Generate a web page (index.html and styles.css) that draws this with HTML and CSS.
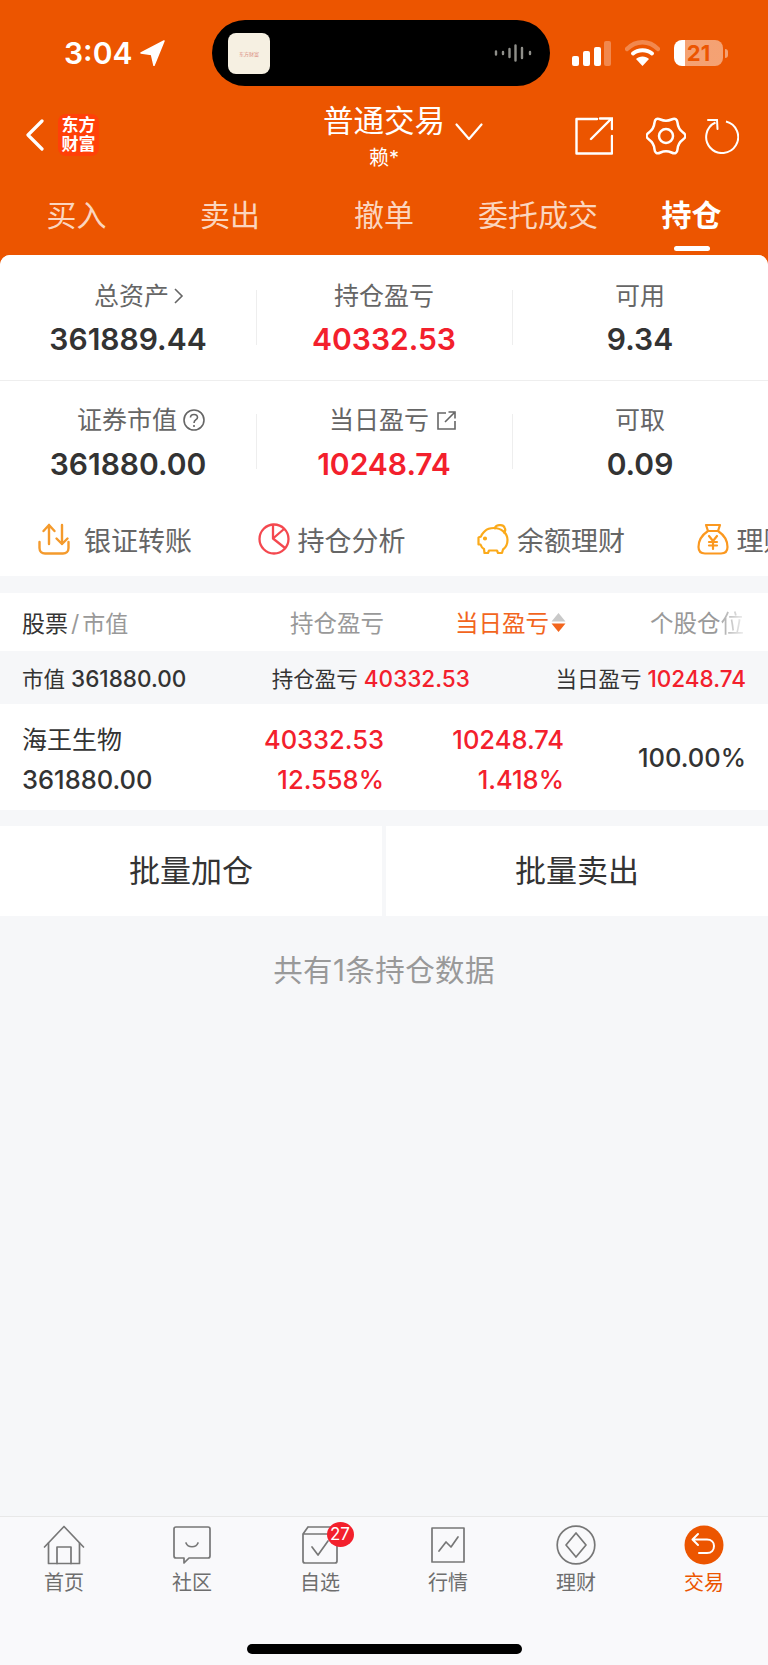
FILE: index.html
```html
<!DOCTYPE html>
<html lang="zh-CN">
<head>
    <meta charset="UTF-8"/>
    <meta name="viewport" content="width=device-width, initial-scale=1.0"/>
    <title>普通交易</title>
    <link rel="stylesheet" href="styles.css">
</head>
<body>
<div class="app">
    <header class="header">
        <div class="status">
            <div class="status-time">
                <span>3:04</span>
                <svg width="25" height="26" viewBox="0 0 25 26"><path d="M24 1 L1 13 L11.500 14.500 L14 25.500 Z" fill="#fff" stroke="#fff" stroke-width="1.500" stroke-linejoin="round"/></svg>
            </div>
            <div class="island">
                <div class="island-app">东方财富</div>
                <svg width="38" height="18" viewBox="0 0 38 18" class="wave">
                    <g stroke="#8f8f8a" stroke-width="2.400" stroke-linecap="round">
                        <path d="M2 7.500V10.500M9 8V10M15.500 5V13M21.500 1.500V16.500M28 4V14M36 8V10"/>
                    </g>
                </svg>
            </div>
            <div class="status-right">
                <svg width="39" height="25" viewBox="0 0 39 25">
                    <rect x="0" y="15" width="7" height="10" rx="2" fill="#fff"/>
                    <rect x="11" y="10" width="7" height="15" rx="2" fill="#fff"/>
                    <rect x="22" y="6" width="7" height="19" rx="2" fill="#fff"/>
                    <rect x="32" y="0" width="7" height="25" rx="2" fill="#fff" opacity=".3"/>
                </svg>
                <svg width="35" height="26" viewBox="0 0 35 26" class="wifi">
                    <path d="M2 9 C11 0 24 0 33 9" fill="none" stroke="#fff" stroke-opacity=".3" stroke-width="4.500" stroke-linecap="round"/>
                    <path d="M8 13.500 C13 9 22 9 27 13.500" fill="none" stroke="#fff" stroke-width="4" stroke-linecap="round"/>
                    <path d="M17.500 26 L11 19 C14 15.500 21 15.500 24 19 Z" fill="#fff"/>
                </svg>
                <div class="battery">
                    <div class="battery-body"><span>21</span></div>
                    <div class="battery-tip"></div>
                </div>
            </div>
        </div>

        <div class="nav">
            <div class="nav-left">
                <svg width="20" height="32" viewBox="0 0 20 32"><path d="M17 2 L3 16 L17 30" fill="none" stroke="#fff" stroke-width="3.200" stroke-linecap="round" stroke-linejoin="round"/></svg>
                <div class="logo">东方<br>财富</div>
            </div>
            <div class="nav-title">
                <div class="title">普通交易</div>
                <div class="subtitle">赖*</div>
            </div>
            <div class="nav-right">
                <svg class="nav-caret" width="28" height="18" viewBox="0 0 28 18"><path d="M1.500 1.500 L14 16 L26.500 1.500" fill="none" stroke="#fff" stroke-width="2.200" stroke-linecap="round" stroke-linejoin="round"/></svg>
                <div class="nav-icons">
                    <svg width="38" height="38" viewBox="0 0 38 38">
                        <path d="M22 2 H1.500 V36.500 H37 V19" fill="none" stroke="#fff" stroke-width="2.400" stroke-linecap="round" stroke-linejoin="round"/>
                        <path d="M16 22 L36 2 M25 1.500 H37 V12" fill="none" stroke="#fff" stroke-width="2.400" stroke-linecap="round"/>
                    </svg>
                    <svg width="40" height="40" viewBox="0 0 40 40">
                        <path d="M37.050 16.500 Q32.100 13 31.550 6.970 Q31 .95 25.500 3.500 Q20 6 14.500 3.500 Q9 .95 8.450 6.970 Q7.900 13 2.950 16.500 Q-2 20 2.950 23.500 Q7.900 27 8.450 33.030 Q9 39.050 14.500 36.500 Q20 34 25.500 36.500 Q31 39.050 31.550 33.030 Q32.100 27 37.050 23.500 Q42 20 37.050 16.500 Z" fill="none" stroke="#fff" stroke-width="2.500" stroke-linejoin="round"/>
                        <circle cx="20" cy="20" r="7" fill="none" stroke="#fff" stroke-width="2.500"/>
                    </svg>
                    <svg width="35" height="36" viewBox="0 0 35 36">
                        <path d="M11.500 4.500 A16 16 0 1 0 22 3.500" fill="none" stroke="#fff" stroke-width="2"/>
                        <path d="M4 2 H13 L13.500 11" fill="none" stroke="#fff" stroke-width="2" stroke-linecap="round"/>
                    </svg>
                </div>
            </div>
        </div>

        <nav class="tabs">
            <div class="tab">买入</div>
            <div class="tab">卖出</div>
            <div class="tab">撤单</div>
            <div class="tab">委托成交</div>
            <div class="tab active">持仓</div>
        </nav>
    </header>

    <main class="content">
        <section class="card">
            <div class="stats">
                <div class="stat">
                    <div class="stat-label shift-total">总资产<svg class="tail" width="11" height="18" viewBox="0 0 11 18"><path d="M2 2 L9 9 L2 16" fill="none" stroke="#666" stroke-width="1.600"/></svg></div>
                    <div class="stat-value">361889.44</div>
                </div>
                <div class="stat">
                    <div class="stat-label">持仓盈亏</div>
                    <div class="stat-value red">40332.53</div>
                </div>
                <div class="stat">
                    <div class="stat-label">可用</div>
                    <div class="stat-value">9.34</div>
                </div>
            </div>
            <div class="stats second">
                <div class="stat">
                    <div class="stat-label shift-one">证券市值<svg class="tail" width="22" height="22" viewBox="0 0 22 22"><circle cx="11" cy="11" r="10" fill="none" stroke="#666" stroke-width="1.600"/><path d="M7.500 8.500 C7.500 4.500 14.500 4.500 14.500 8.500 C14.500 11 11 10.500 11 14" fill="none" stroke="#666" stroke-width="1.600"/><circle cx="11" cy="17" r="1.100" fill="#666"/></svg></div>
                    <div class="stat-value">361880.00</div>
                </div>
                <div class="stat">
                    <div class="stat-label shift-two">当日盈亏<svg class="tail" width="21" height="21" viewBox="0 0 21 21"><path d="M10 3 H2 V19 H19 V11" fill="none" stroke="#666" stroke-width="1.600"/><path d="M9 12 L18 3 M12.500 2 H19 V8.500" fill="none" stroke="#666" stroke-width="1.600"/></svg></div>
                    <div class="stat-value red">10248.74</div>
                </div>
                <div class="stat">
                    <div class="stat-label">可取</div>
                    <div class="stat-value">0.09</div>
                </div>
            </div>
            <div class="actions">
                <div class="action wide">
                    <svg width="32" height="32" viewBox="0 0 32 32" fill="none" stroke="#f49a2c" stroke-width="2.400" stroke-linecap="round" stroke-linejoin="round">
                        <path d="M11 21 V2 M5.500 8 L11 2 L16.500 8"/>
                        <path d="M24 2 V21 M18.500 15.500 L24 21 L29.500 15.500"/>
                        <path d="M1.500 19 V25 C1.500 28.500 4 30.500 7 30.500 H25 C28 30.500 30.500 28.500 30.500 25 V19"/>
                    </svg>
                    <span>银证转账</span>
                </div>
                <div class="action">
                    <svg width="32" height="32" viewBox="0 0 32 32" fill="none" stroke="#f4484f" stroke-width="2.300" stroke-linecap="round" stroke-linejoin="round">
                        <circle cx="16" cy="16" r="14.500"/>
                        <path d="M15 2 V15.500 L27 25 M15 15.500 L26 6"/>
                    </svg>
                    <span>持仓分析</span>
                </div>
                <div class="action">
                    <svg width="32" height="32" viewBox="0 0 32 32" fill="none" stroke="#fbaa1a" stroke-width="2.200" stroke-linecap="round" stroke-linejoin="round">
                        <path d="M8 8 C9.500 6.500 13 5 17 5 C24 5 30.500 10 30.500 17 C30.500 22 28 25 26 26.500 L25 30 H21 L20 27.500 H12 L11 30 H7.500 L7 26 C5 25 4 23 3.500 21.500 H1.500 V14.500 L4 13.500 C4.500 12 5.500 10.500 6.500 9.500 Z"/>
                        <path d="M18 5.500 C18 2 26 0.500 27.500 4.500 C28.500 6 28.500 8 27 9.500"/>
                        <circle cx="8" cy="15.500" r="1" fill="#fbaa1a"/>
                    </svg>
                    <span>余额理财</span>
                </div>
                <div class="action">
                    <svg width="32" height="32" viewBox="0 0 32 32" fill="none" stroke="#fb981f" stroke-width="2.200" stroke-linecap="round" stroke-linejoin="round">
                        <path d="M9 2 H23 L21 8 H11 Z"/>
                        <path d="M11 8 C5 12 1.500 18 1.500 24 C1.500 28 4 30.500 8 30.500 H24 C28 30.500 30.500 28 30.500 24 C30.500 18 27 12 21 8"/>
                        <path d="M12 13 L16 18 L20 13 M16 18 V26 M12 19 H20 M12 22.500 H20"/>
                    </svg>
                    <span>理财</span>
                </div>
            </div>
        </section>

        <section class="table">
            <div class="table-head cols">
                <div class="head-name">股票<em>/</em><i>市值</i></div>
                <div class="head-cell">持仓盈亏</div>
                <div class="head-cell sorted">当日盈亏
                    <svg width="15" height="21" viewBox="0 0 15 21"><path d="M7.500 1 L14.500 9.500 H.5 Z" fill="#c9c9c9"/><path d="M.5 11.500 H14.500 L7.500 20 Z" fill="#f2651d"/></svg>
                </div>
                <div class="head-cell">个股仓<span class="fade">位</span></div>
            </div>
            <div class="summary">
                <div>市值 <b>361880.00</b></div>
                <div>持仓盈亏 <b class="red">40332.53</b></div>
                <div>当日盈亏 <b class="red">10248.74</b></div>
            </div>
            <div class="row cols">
                <div>
                    <div class="row-name">海王生物</div>
                    <div class="row-num">361880.00</div>
                </div>
                <div class="row-right red">
                    <div class="row-num">40332.53</div>
                    <div class="row-num">12.558%</div>
                </div>
                <div class="row-right red">
                    <div class="row-num">10248.74</div>
                    <div class="row-num">1.418%</div>
                </div>
                <div class="row-right row-num row-share">100.00%</div>
            </div>
        </section>

        <section class="batch">
            <div class="batch-btn">批量加仓</div>
            <div class="batch-btn">批量卖出</div>
        </section>

        <p class="note">共有1条持仓数据</p>
    </main>

    <footer class="tabbar">
        <div class="bar-items">
            <div class="bar-item">
                <svg width="42" height="40" viewBox="0 0 42 40" fill="none" stroke="#777" stroke-width="1.700" stroke-linejoin="round" stroke-linecap="round">
                    <path d="M1.500 22 L21 1.500 L40.500 22"/>
                    <path d="M5.500 18 V38.500 H36.500 V18"/>
                    <path d="M14 38.500 V22 H28 V38.500"/>
                </svg>
                <span>首页</span>
            </div>
            <div class="bar-item">
                <svg width="40" height="40" viewBox="0 0 40 40" fill="none" stroke="#777" stroke-width="1.700" stroke-linejoin="round" stroke-linecap="round">
                    <path d="M4 2 H36 C37 2 38 3 38 4 V31 C38 32 37 33 36 33 H17 L12 38 V33 H4 C3 33 2 32 2 31 V4 C2 3 3 2 4 2 Z"/>
                    <path d="M14 18 C16 23 24 23 26 18"/>
                </svg>
                <span>社区</span>
            </div>
            <div class="bar-item">
                <svg width="40" height="40" viewBox="0 0 40 40" fill="none" stroke="#777" stroke-width="1.700" stroke-linejoin="round" stroke-linecap="round">
                    <path d="M8 2 H34 M8 2 L3 9 V36 C3 37 4 38 5 38 H35 C36 38 37 37 37 36 V9 H3"/>
                    <path d="M12 22 L18 30 L28 16"/>
                </svg>
                <span class="badge">27</span>
                <span>自选</span>
            </div>
            <div class="bar-item">
                <svg width="40" height="40" viewBox="0 0 40 40" fill="none" stroke="#777" stroke-width="1.700" stroke-linejoin="round" stroke-linecap="round">
                    <path d="M4 3 H36 V37 H4 Z"/>
                    <path d="M11 26 L18 17 L23 22 L30 12"/>
                </svg>
                <span>行情</span>
            </div>
            <div class="bar-item">
                <svg width="40" height="40" viewBox="0 0 40 40" fill="none" stroke="#777" stroke-width="1.700" stroke-linejoin="round">
                    <circle cx="20" cy="20" r="18.800"/>
                    <path d="M20 8 L30 20 L20 32 L10 20 Z"/>
                </svg>
                <span>理财</span>
            </div>
            <div class="bar-item current">
                <svg width="40" height="40" viewBox="0 0 40 40" fill="none">
                    <circle cx="20" cy="20" r="19.500" fill="#ec5500"/>
                    <path d="M14 9 L8.500 14.500 L14 20 M9 14.500 H23 C27.500 14.500 30 17.500 30 21 C30 25 27.500 28 23 28 H15" stroke="#fff" stroke-width="2" stroke-linecap="round" stroke-linejoin="round"/>
                </svg>
                <span>交易</span>
            </div>
        </div>
        <div class="home-bar"></div>
    </footer>
</div>
</body>
</html>
```

FILE: styles.css
```css
* {
    box-sizing: border-box;
}

body {
    margin: 0;
    font-family: Inter, "Noto Sans CJK SC", sans-serif;
    color: #333;
}

.app {
    width: 768px;
    height: 1665px;
    display: flex;
    flex-direction: column;
    overflow: hidden;
    background-color: #ec5500;
}

.red {
    color: #f3202c;
}

/* status bar */
.status {
    height: 106px;
    display: flex;
    align-items: center;
    padding-left: 64px;
    color: #fff;
}

.status-time {
    width: 148px;
    display: flex;
    align-items: center;
    gap: 8px;
    font-size: 30px;
    font-weight: 600;
}

.island {
    width: 338px;
    height: 66px;
    border-radius: 33px;
    background-color: #000;
    display: flex;
    align-items: center;
    justify-content: space-between;
    padding: 0 18px 0 16px;
}

.island-app {
    width: 42px;
    height: 41px;
    border-radius: 8px;
    background-color: #f6f0e2;
    color: #d98a80;
    font-size: 5px;
    display: flex;
    align-items: center;
    justify-content: center;
}

.status-right {
    display: flex;
    align-items: center;
    margin-left: 22px;
}

.wifi {
    margin-left: 14px;
}

.battery {
    display: flex;
    align-items: center;
    margin-left: 14px;
}

.battery-body {
    width: 49px;
    height: 26px;
    border-radius: 8px;
    background: linear-gradient(to right, #fff 0, #fff 11px, rgba(255, 255, 255, 0.45) 11px);
    color: #ec5500;
    font-size: 22px;
    font-weight: 700;
    line-height: 26px;
    text-align: center;
}

.battery-tip {
    width: 3px;
    height: 9px;
    margin-left: 2px;
    border-radius: 0 3px 3px 0;
    background-color: rgba(255, 255, 255, 0.45);
}

/* title row */
.nav {
    height: 70px;
    display: grid;
    grid-template-columns: 1fr auto 1fr;
    color: #fff;
}

.nav-left {
    display: flex;
    align-items: center;
    gap: 13px;
    height: 52px;
    padding-left: 25px;
    margin-top: 3px;
}

.logo {
    width: 41px;
    height: 42px;
    border-radius: 8px;
    background-color: #ff4008;
    font-size: 17px;
    font-weight: 700;
    line-height: 19px;
    text-align: center;
    padding-top: 2px;
}

.nav-title {
    text-align: center;
}

.title {
    font-size: 30.500px;
    line-height: 30px;
}

.subtitle {
    font-size: 20px;
    line-height: 26px;
    margin-top: 9px;
}

.nav-right {
    display: flex;
    align-items: flex-start;
    padding-right: 29px;
}

.nav-caret {
    margin: 17px 0 0 10px;
}

.nav-icons {
    margin-left: auto;
    display: flex;
    align-items: center;
    gap: 32.500px;
    margin-top: 10px;
}

.nav-icons svg + svg + svg {
    margin-left: -14px;
}

/* tabs */
.tabs {
    height: 79px;
    display: grid;
    grid-template-columns: 153px 154px 154px 154px 153px;
    color: #fbd5bf;
    font-size: 30px;
    text-align: center;
    line-height: 79px;
}

.tab {
    position: relative;
}

.tab.active {
    color: #fff;
    font-weight: 700;
}

.tab.active::after {
    content: "";
    position: absolute;
    left: 59px;
    top: 70px;
    width: 36px;
    height: 5px;
    border-radius: 3px;
    background-color: #fff;
}

/* main area */
.content {
    flex: 1;
    background-color: #f6f7f9;
    border-radius: 10px 10px 0 0;
    overflow: hidden;
}

.card {
    background-color: #fff;
}

.stats {
    display: grid;
    grid-template-columns: repeat(3, 1fr);
    height: 126px;
    padding-top: 26px;
    border-bottom: 1px solid #eee;
}

.stats.second {
    height: auto;
    padding-top: 24px;
    border-bottom: 0;
}

.stat {
    position: relative;
    text-align: center;
}

.stat + .stat::before {
    content: "";
    position: absolute;
    left: 0;
    top: 9px;
    width: 1px;
    height: 55px;
    background-color: #eee;
}

.stat-label {
    font-size: 25px;
    line-height: 30px;
    color: #666;
    display: flex;
    align-items: center;
    justify-content: center;
}

.tail {
    margin-left: 7px;
    margin-right: -18px;
}

.shift-total {
    padding-left: 4px;
}

.shift-total .tail {
    margin-left: 4px;
}

.shift-one {
    padding-right: 2px;
}

.shift-one .tail {
    margin-left: 6px;
    margin-right: -28px;
}

.shift-two {
    padding-right: 10px;
}

.shift-two .tail {
    margin-right: -28px;
}

.stat-value {
    font-size: 30px;
    font-weight: 600;
    line-height: 40px;
    margin-top: 8px;
}

.second .stat-value {
    margin-top: 9px;
}

.actions {
    height: 92px;
    padding: 32px 0 0 38px;
    display: grid;
    grid-template-columns: repeat(4, 219.5px);
    color: #666;
    font-size: 27px;
}

.action {
    display: flex;
    align-items: center;
    gap: 8px;
    height: 46px;
    white-space: nowrap;
}

.action.wide {
    gap: 14px;
}

/* positions table */
.table {
    margin-top: 17px;
}

.cols {
    display: grid;
    padding: 0 22px;
}

.table-head {
    height: 58px;
    grid-template-columns: 200px 162px 182px 178px;
    align-items: center;
    background-color: #fff;
    color: #999;
    font-size: 23.500px;
}

.head-name {
    font-size: 23px;
    color: #333;
}

.head-name em {
    font-style: normal;
    color: #999;
    margin: 0 3px;
}

.head-name i {
    font-style: normal;
    color: #999;
}

.head-cell {
    text-align: right;
    white-space: nowrap;
}

.sorted {
    color: #f2651d;
    display: flex;
    align-items: center;
    justify-content: flex-end;
    gap: 2px;
}

.fade {
    background: linear-gradient(to right, #aaa, #eee);
    -webkit-background-clip: text;
    background-clip: text;
    color: transparent;
}

.summary {
    height: 53px;
    display: flex;
    align-items: center;
    justify-content: space-between;
    padding: 0 22px;
    font-size: 21.500px;
}

.summary b {
    font-size: 22.500px;
    font-weight: 500;
}

.row {
    height: 106px;
    grid-template-columns: 200px 162px 180px 182px;
    align-items: center;
    padding-top: 6px;
    background-color: #fff;
}

.row-name {
    font-size: 25px;
    line-height: 40px;
}

.row-num {
    font-size: 25.500px;
    font-weight: 500;
    line-height: 40px;
}

.row-share {
    margin-top: -4px;
}

.row-right {
    text-align: right;
}

.batch {
    margin-top: 16px;
    height: 90px;
    display: grid;
    grid-template-columns: 382px 382px;
    gap: 4px;
}

.batch-btn {
    background-color: #fff;
    font-size: 31px;
    line-height: 90px;
    text-align: center;
}

.note {
    margin: 34px 0 0;
    font-size: 29.500px;
    letter-spacing: 0.4px;
    line-height: 40px;
    color: #999;
    text-align: center;
}

/* bottom bar */
.tabbar {
    height: 149px;
    background-color: #f9f9fb;
    border-top: 1px solid #e8e8e8;
}

.bar-items {
    display: grid;
    grid-template-columns: repeat(6, 1fr);
    padding-top: 8px;
}

.bar-item {
    position: relative;
    display: flex;
    flex-direction: column;
    align-items: center;
    gap: 4px;
    color: #6e6e6e;
    font-size: 20px;
    line-height: 28px;
}

.bar-item.current {
    color: #ec5500;
}

.badge {
    position: absolute;
    left: 70.500px;
    top: -3px;
    width: 27px;
    height: 25px;
    border-radius: 50%;
    background-color: #f3202c;
    color: #fff;
    font-size: 17px;
    line-height: 25px;
    text-align: center;
}

.home-bar {
    width: 275px;
    height: 10px;
    border-radius: 5px;
    background-color: #000;
    margin: 47px auto 0;
}
```
